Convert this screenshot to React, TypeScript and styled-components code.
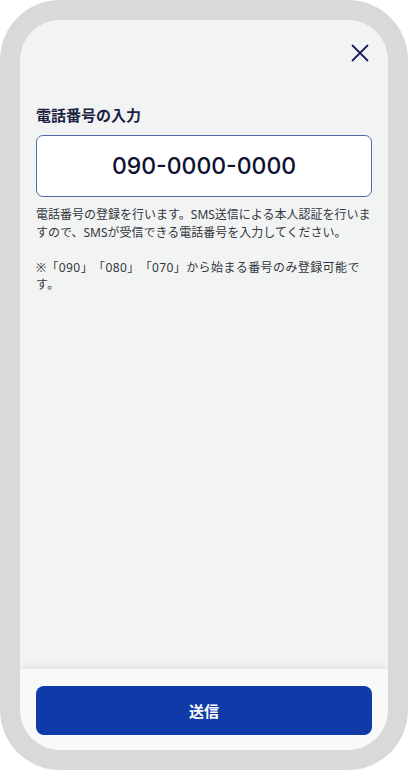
import styled, { createGlobalStyle } from 'styled-components';

const GlobalStyle = createGlobalStyle`
  html, body {
    margin: 0;
    padding: 0;
    background: #ffffff;
  }

  * {
    box-sizing: border-box;
  }

  body {
    font-family: 'Noto Sans CJK JP', 'Inter', sans-serif;
  }
`;

const Frame = styled.div`
  width: 408px;
  height: 770px;
  padding: 20px;
  border-radius: 60px;
  background: #d9d9d9;
`;

const Screen = styled.div`
  display: flex;
  flex-direction: column;
  height: 100%;
  border-radius: 40px;
  background: #f2f4f4;
  overflow: hidden;
`;

const Header = styled.header`
  display: flex;
  justify-content: flex-end;
  align-items: center;
  height: 66px;
  padding: 0 12px 0 0;
`;

const CloseButton = styled.button`
  display: flex;
  align-items: center;
  justify-content: center;
  width: 32px;
  height: 32px;
  padding: 0;
  border: none;
  background: none;
  color: #1b1f5a;
  cursor: pointer;
`;

const Content = styled.main`
  flex: 1;
  padding: 18px 16px 0;
`;

const Title = styled.h2`
  margin: 0;
  font-size: 15px;
  line-height: 22px;
  font-weight: 700;
  color: #1c2242;
`;

const PhoneInput = styled.input`
  display: block;
  width: 100%;
  height: 62px;
  margin-top: 9px;
  border: 1px solid #4d6aa3;
  border-radius: 7px;
  background: #ffffff;
  font-family: 'Inter', 'Noto Sans CJK JP', sans-serif;
  font-size: 23px;
  font-weight: 500;
  text-align: center;
  color: #0d1230;
  outline: none;
`;

const Notes = styled.div`
  margin-top: 9px;
`;

const Note = styled.p<{ $tracking?: number }>`
  margin: 0;
  font-family: 'Noto Sans', 'Noto Sans CJK JP', sans-serif;
  font-size: 12px;
  line-height: 17.5px;
  letter-spacing: ${(p) => p.$tracking ?? 0}px;
  color: #33363d;
  text-spacing-trim: space-all;

  & + & {
    margin-top: 17.5px;
  }
`;

const Footer = styled.footer`
  padding: 17px 16px 15px;
  background: #f8f9f9;
  box-shadow: 0 -4px 8px rgba(0, 0, 0, 0.05);
`;

const SubmitButton = styled.button`
  width: 100%;
  height: 49px;
  border: none;
  border-radius: 8px;
  background: #0f3aa8;
  font-family: 'Noto Sans CJK JP', sans-serif;
  font-size: 15px;
  font-weight: 700;
  color: #ffffff;
  cursor: pointer;
`;

export default function App() {
  return (
    <>
      <GlobalStyle />
      <Frame>
        <Screen>
          <Header>
            <CloseButton aria-label="閉じる">
              <svg width="18" height="18" viewBox="0 0 18 18" fill="none">
                <path
                  d="M1.5 1.5L16.5 16.5M16.5 1.5L1.5 16.5"
                  stroke="currentColor"
                  strokeWidth="1.8"
                  strokeLinecap="round"
                />
              </svg>
            </CloseButton>
          </Header>
          <Content>
            <Title>電話番号の入力</Title>
            <PhoneInput type="tel" defaultValue="090-0000-0000" />
            <Notes>
              <Note>
                電話番号の登録を行います。SMS送信による本人認証を行いますので、SMSが受信できる電話番号を入力してください。
              </Note>
              <Note $tracking={0.4}>
                ※「090」「080」「070」から始まる番号のみ登録可能です。
              </Note>
            </Notes>
          </Content>
          <Footer>
            <SubmitButton>送信</SubmitButton>
          </Footer>
        </Screen>
      </Frame>
    </>
  );
}
